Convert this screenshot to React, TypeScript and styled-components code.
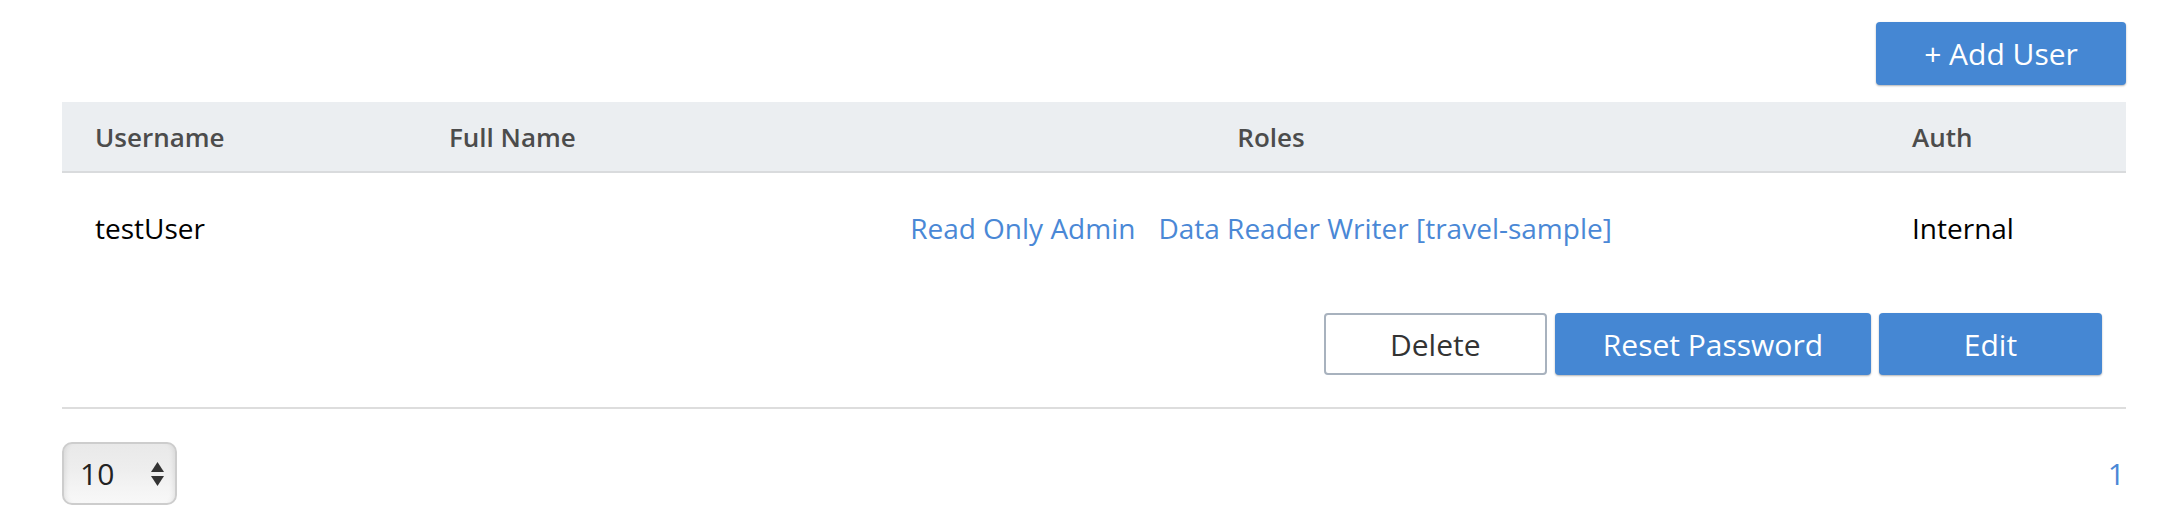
import React from "react";
import styled, { createGlobalStyle } from "styled-components";

const GlobalStyle = createGlobalStyle`
  html, body { margin: 0; padding: 0; background: #ffffff; }
  body { font-family: "Open Sans", "Liberation Sans", sans-serif; color: #000; }
  * { box-sizing: border-box; }
`;

const Page = styled.div`
  padding: 22px 34px 0 62px;
  width: 2160px;
`;

const Toolbar = styled.div`
  display: flex;
  justify-content: flex-end;
  margin-bottom: 17px;
`;

const Button = styled.button<{ $variant?: "primary" | "outline" }>`
  height: 62px;
  min-width: 223px;
  padding: 0 48px;
  border-radius: 4px;
  font-family: "Open Sans", "Liberation Sans", sans-serif;
  font-size: 30px;
  font-weight: 400;
  cursor: pointer;
  border: ${(p) => (p.$variant === "outline" ? "2px solid #a8b2be" : "none")};
  background: ${(p) => (p.$variant === "outline" ? "#ffffff" : "#4587d3")};
  color: ${(p) => (p.$variant === "outline" ? "#333333" : "#ffffff")};
  box-shadow: ${(p) =>
    p.$variant === "outline" ? "none" : "0 1px 2px rgba(0, 0, 0, 0.3)"};
`;

const AddButton = styled(Button)`
  width: 250px;
  height: 63px;
  padding: 0;
`;

const cols = "354px 247px 1fr 247px";

const HeaderRow = styled.div`
  display: grid;
  grid-template-columns: ${cols};
  height: 71px;
  background: #ebeef1;
  border-bottom: 2px solid #d9dbdd;
  align-items: center;
`;

const HeaderCell = styled.div<{ $center?: boolean }>`
  font-size: 26px;
  font-weight: 600;
  color: #4c4c4c;
  padding-left: ${(p) => (p.$center ? "0" : "33px")};
  text-align: ${(p) => (p.$center ? "center" : "left")};
`;

const Row = styled.div`
  border-bottom: 2px solid #dddddd;
  padding-bottom: 32px;
`;

const DataLine = styled.div`
  display: grid;
  grid-template-columns: ${cols};
  padding-top: 36px;
  line-height: 38px;
  font-size: 28px;
`;

const Cell = styled.div<{ $center?: boolean }>`
  padding-left: ${(p) => (p.$center ? "0" : "33px")};
  text-align: ${(p) => (p.$center ? "center" : "left")};
  color: #000;
`;

const RoleLink = styled.a`
  display: inline-block;
  margin-right: 20px;
  color: #4a88d6;
  text-decoration: none;
  & + & {
    margin-left: 3px;
  }
`;

const Actions = styled.div`
  display: flex;
  justify-content: flex-end;
  gap: 8px;
  padding-right: 24px;
  margin-top: 66px;
`;

const Pager = styled.div`
  display: flex;
  justify-content: space-between;
  align-items: center;
  padding-top: 33px;
`;

const SelectWrap = styled.div`
  position: relative;
  width: 115px;
  height: 63px;
`;

const Select = styled.select`
  appearance: none;
  -webkit-appearance: none;
  width: 100%;
  height: 100%;
  border: 2px solid #cdcdcd;
  border-radius: 10px;
  padding: 0 0 0 16px;
  font-family: "Open Sans", "Liberation Sans", sans-serif;
  font-size: 30px;
  color: #222;
  background: linear-gradient(to bottom, #e9e9e9 0%, #eeeeee 45%, #f4f4f4 75%, #f8f8f8 100%);
  box-shadow: inset 6px 0 6px -6px rgba(0, 0, 0, 0.12), inset -6px 0 6px -6px rgba(0, 0, 0, 0.12);
  outline: none;
`;

const Arrows = styled.svg`
  position: absolute;
  right: 13px;
  top: 20px;
  pointer-events: none;
`;

const PageLink = styled.a`
  font-size: 30px;
  color: #4a88d6;
  padding-right: 1px;
  text-decoration: none;
`;

export default function App() {
  return (
    <>
      <GlobalStyle />
      <Page>
        <Toolbar>
          <AddButton>+ Add User</AddButton>
        </Toolbar>
        <HeaderRow>
          <HeaderCell>Username</HeaderCell>
          <HeaderCell>Full Name</HeaderCell>
          <HeaderCell $center>Roles</HeaderCell>
          <HeaderCell>Auth</HeaderCell>
        </HeaderRow>
        <Row>
          <DataLine>
            <Cell>testUser</Cell>
            <Cell></Cell>
            <Cell $center>
              <RoleLink>Read Only Admin</RoleLink>
              <RoleLink>Data Reader Writer [travel-sample]</RoleLink>
            </Cell>
            <Cell>Internal</Cell>
          </DataLine>
          <Actions>
            <Button $variant="outline">Delete</Button>
            <Button>Reset Password</Button>
            <Button>Edit</Button>
          </Actions>
        </Row>
        <Pager>
          <SelectWrap>
            <Select defaultValue="10">
              <option value="10">10</option>
              <option value="20">20</option>
              <option value="50">50</option>
            </Select>
            <Arrows width="13" height="24" viewBox="0 0 13 24">
              <path d="M6.5 0 L13 10 L0 10 Z" fill="#333" />
              <path d="M0 14 L13 14 L6.5 24 Z" fill="#333" />
            </Arrows>
          </SelectWrap>
          <PageLink>1</PageLink>
        </Pager>
      </Page>
    </>
  );
}
